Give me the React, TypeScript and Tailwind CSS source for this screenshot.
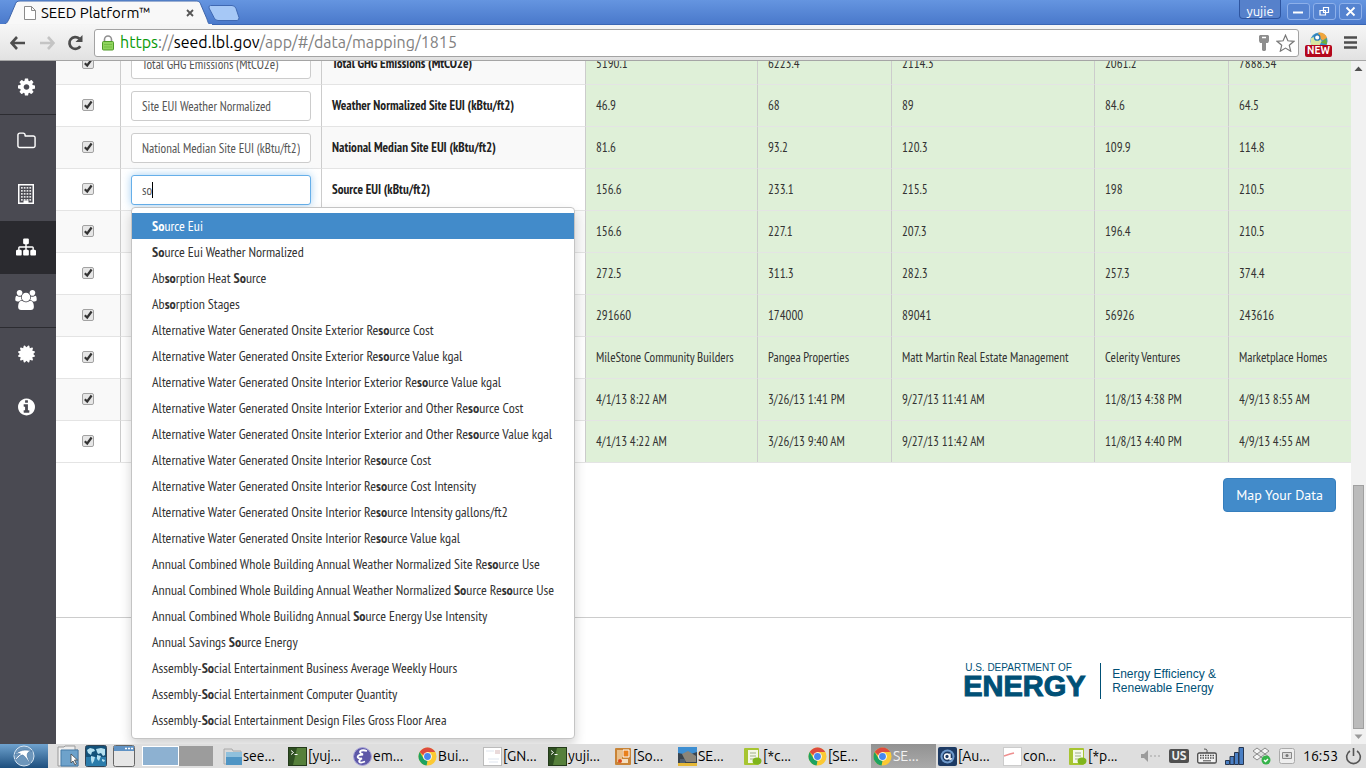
import React from "react";

const PAGE_FONT = "font-['PT_Sans_Narrow','Liberation_Sans_Narrow','Noto_Sans',sans-serif]";
const UI_FONT = "font-['Ubuntu','Noto_Sans',sans-serif]";

/* ---------- Window frame ---------- */

function TabStrip() {
  return (
    <header className="flex h-[25px] shrink-0 items-end justify-between border-b border-[#3a66b4] bg-linear-to-b from-[#6595e0] to-[#4a79cb]">
      <div className="flex items-end">
        <div className="relative -mb-px h-[25px] w-[212px]">
          <svg className="absolute inset-0 h-full w-full" viewBox="0 0 212 25" aria-hidden="true">
            <path d="M0 25 C6 25 7 23 9 19 L15 5 C16 2 17 1 20 1 H195 C199 1 200 2 201 5 L207 19 C208 23 209 25 212 25Z" fill="#f8f8f8" stroke="#3f66ab" strokeWidth="1" />
            <path d="M0 24H212V25H0Z" fill="#f5f5f5" />
          </svg>
          <div className="relative flex h-full items-center pr-3.5 pl-6">
            <svg width="12" height="14" viewBox="0 0 12 14" aria-hidden="true">
              <path d="M.5.5h7l4 4v9H.5z M7.5.5v4h4" fill="#fff" stroke="#8a8a8a" />
            </svg>
            <span className="ml-[5px] grow text-[15px] leading-5 text-black">SEED Platform™</span>
            <button aria-label="Close tab" className="flex size-4 items-center justify-center">
              <svg width="8" height="8" viewBox="0 0 8 8"><path d="M1 1l6 6M7 1L1 7" stroke="#555" strokeWidth="1.8" /></svg>
            </button>
          </div>
        </div>
        <button aria-label="New tab" className="mb-[3px] -ml-1">
          <svg width="32" height="16" viewBox="0 0 32 16">
            <path d="M2.500 .5H24q3 0 4 3l3 9q0 3-2 3H10q-3 0-4-3L1 3Q.5.5 2.500.5z" fill="#a6c8f6" stroke="#3f68b2" />
          </svg>
        </button>
      </div>
      <div className="flex h-full items-start gap-[5px] pr-1">
        <button className="h-[19px] w-[42px] rounded-b border border-t-0 border-[#2e55a0] bg-[#5681cb] text-[13px] leading-[22px] text-white">yujie</button>
        <div className="flex gap-[3px] pt-[3px] pl-px">
          <WinButton label="Minimize"><path d="M4 9.500h10" stroke="#fff" strokeWidth="2" /></WinButton>
          <WinButton label="Restore"><path d="M8.500 4.500h5v5h-5z M5 7.500h5.500v4.500H5z" stroke="#fff" strokeWidth="1.200" fill="none" /></WinButton>
          <WinButton label="Close"><path d="M5.500 4.500l8 8M13.500 4.500l-8 8" stroke="#fff" strokeWidth="1.800" /></WinButton>
        </div>
      </div>
    </header>
  );
}

function WinButton({ label, children }: { label: string; children: React.ReactNode }) {
  return (
    <button aria-label={label} className="flex h-[17px] w-[23px] items-center justify-center rounded-[3px] border border-[#8db0ea] bg-[#5583d0]">
      <svg width="19" height="17" viewBox="0 0 19 17">{children}</svg>
    </button>
  );
}

function Toolbar() {
  return (
    <div className="flex h-9 shrink-0 items-center border-b border-[#a5a5a5] bg-linear-to-b from-[#f6f6f6] to-[#e2e2e2] pr-2 pl-2.5">
      <button aria-label="Back" className="w-[29px]">
        <svg width="16" height="14" viewBox="0 0 16 14"><path d="M7 1L1.500 7 7 13M1.500 7H15" fill="none" stroke="#4d4d4d" strokeWidth="2.600" /></svg>
      </button>
      <button aria-label="Forward" className="w-[28px]">
        <svg width="16" height="14" viewBox="0 0 16 14"><path d="M9 1l5.500 6L9 13M14.500 7H1" fill="none" stroke="#c4c4c4" strokeWidth="2.600" /></svg>
      </button>
      <button aria-label="Reload" className="w-[27px]">
        <svg width="17" height="16" viewBox="0 0 17 16">
          <path d="M13.300 11.200A5.900 5.900 0 1 1 12.300 3.600" fill="none" stroke="#4d4d4d" strokeWidth="2.700" />
          <path d="M15.500 0v7H8.500z" fill="#4d4d4d" />
        </svg>
      </button>
      <div className="flex h-7 grow items-center rounded-[3px] border border-[#a3a3a3] bg-white pr-[3px] pl-[7px]">
        <svg width="12" height="16" viewBox="0 0 12 16" aria-hidden="true">
          <path d="M2.500 8V4.500a3.500 3.500 0 0 1 7 0V8" fill="none" stroke="#8f8f8f" strokeWidth="1.600" />
          <rect x=".5" y="6.500" width="11" height="8.500" rx="1" fill="#8fd45e" stroke="#4f9a28" />
          <path d="M2 9.500h8M2 12h8" stroke="#74bd45" />
        </svg>
        <div className="ml-[6px] grow pb-0.5 text-[16px] leading-6 whitespace-nowrap text-[#808080]">
          <span className="text-[#0a9a0a]">https</span>://<span className="text-black">seed.lbl.gov</span>/app/#/data/mapping/1815
        </div>
        <svg width="12" height="16" viewBox="0 0 12 16" aria-hidden="true">
          <path d="M2 0h8l1 1v5l-1 2H8v7l-1 1H5l-1-1V8H2L1 6V1z" fill="#8e8e8e" /><path d="M4 2.500h4" stroke="#fff" strokeWidth="1.500" />
        </svg>
        <button aria-label="Bookmark this page" className="ml-1.5">
          <svg width="19" height="18" viewBox="0 0 19 18"><path d="M9.500 1.200l2.400 5.600 6 .5-4.600 4 1.400 5.900-5.200-3.100-5.200 3.100 1.400-5.900-4.600-4 6-.5z" fill="#fff" stroke="#777" strokeWidth="1.200" /></svg>
        </button>
      </div>
      <div className="relative mt-1 ml-1.5 flex h-[25px] w-[27px] flex-col items-center">
        <svg width="20" height="18" viewBox="0 0 22 20" aria-hidden="true">
          <circle cx="11" cy="10" r="9.500" fill="#3b93c9" /><path d="M11 .5a9.500 9.500 0 0 1 9 6l-5 3-6-6z" fill="#f0a53c" />
          <path d="M2 7l7-3 5 6-3 6-9-2z" fill="#d8e6a0" /><circle cx="9" cy="6" r="3" fill="#fff" stroke="#2d7db8" strokeWidth="1.500" /><path d="M13 12l6-5 1 7z" fill="#6caf3a" />
        </svg>
        <span className="absolute bottom-0 h-[12px] w-full rounded-[2px] bg-[#b4071c] text-center text-[10px] leading-[12px] font-bold text-white">NEW</span>
      </div>
      <button aria-label="Menu" className="ml-3 w-[14px]">
        <svg width="13" height="13" viewBox="0 0 13 13"><path d="M0 1.500h13M0 6.500h13M0 11.500h13" stroke="#4d4d4d" strokeWidth="2.600" /></svg>
      </button>
    </div>
  );
}

/* ---------- Application sidebar ---------- */

const GLYPHS = {
  cog: { box: "0 0 1536 1792", w: 17, d: "M1024 896q0-106-75-181t-181-75-181 75-75 181 75 181 181 75 181-75 75-181zm512-109v222q0 12-8 23t-20 13l-185 28q-19 54-39 91 35 50 107 138 10 12 10 25t-9 23q-27 37-99 108t-94 71q-12 0-26-9l-138-108q-44 23-91 38-16 136-29 186-7 28-36 28h-222q-14 0-24.500-8.500t-11.500-21.500l-28-184q-49-16-90-37l-141 107q-10 9-25 9-14 0-25-11-126-114-165-168-7-10-7-23 0-12 8-23 15-21 51-66.500t54-70.500q-27-50-41-99l-183-27q-13-2-21-12.500t-8-23.500v-222q0-12 8-23t19-13l186-28q14-46 39-92-40-57-107-138-10-12-10-24 0-10 9-23 26-36 98.500-107.500t94.500-71.500q13 0 26 10l138 107q44-23 91-38 16-136 29-186 7-28 36-28h222q14 0 24.500 8.500t11.500 21.500l28 184q49 16 90 37l142-107q9-9 24-9 13 0 25 10 129 119 165 170 7 8 7 22 0 12-8 23-15 21-51 66.500t-54 70.500q26 50 41 98l183 28q13 2 21 12.500t8 23.500z" },
  folder: { box: "0 0 1664 1792", w: 19, d: "M1536 1312v-704q0-40-28-68t-68-28h-704q-40 0-68-28t-28-68v-64q0-40-28-68t-68-28h-320q-40 0-68 28t-28 68v960q0 40 28 68t68 28h1216q40 0 68-28t28-68zm128-704v704q0 92-66 158t-158 66h-1216q-92 0-158-66t-66-158v-960q0-92 66-158t158-66h320q92 0 158 66t66 158v32h672q92 0 158 66t66 158z" },
  sitemap: { box: "0 0 1792 1792", w: 20, d: "M1792 1248v320q0 40-28 68t-68 28h-320q-40 0-68-28t-28-68v-320q0-40 28-68t68-28h96v-192h-512v192h96q40 0 68 28t28 68v320q0 40-28 68t-68 28h-320q-40 0-68-28t-28-68v-320q0-40 28-68t68-28h96v-192h-512v192h96q40 0 68 28t28 68v320q0 40-28 68t-68 28h-320q-40 0-68-28t-28-68v-320q0-40 28-68t68-28h96v-192q0-52 38-90t90-38h512v-192h-96q-40 0-68-28t-28-68v-320q0-40 28-68t68-28h320q40 0 68 28t28 68v320q0 40-28 68t-68 28h-96v192h512q52 0 90 38t38 90v192h96q40 0 68 28t28 68z" },
  users: { box: "-64 0 1920 1792", w: 22, d: "M529 896q-162 5-265 128h-134q-82 0-138-40.500t-56-118.500q0-353 124-353 6 0 43.500 21t97.500 42.500 119 21.500q67 0 133-23-5 37-5 66 0 139 81 256zm1071 637q0 120-73 189.500t-194 69.500h-874q-121 0-194-69.500t-73-189.500q0-53 3.500-103.500t14-109 26.500-108.500 43-97.500 62-81 85.500-53.500 111.500-20q10 0 43 21.500t73 48 107 48 135 21.500 135-21.500 107-48 73-48 43-21.500q61 0 111.500 20t85.500 53.500 62 81 43 97.500 26.500 108.500 14 109 3.500 103.500zm-1024-1277q0 106-75 181t-181 75-181-75-75-181 75-181 181-75 181 75 75 181zm704 384q0 159-112.500 271.500t-271.500 112.500-271.500-112.500-112.500-271.500 112.500-271.500 271.500-112.500 271.500 112.500 112.500 271.500zm576 225q0 78-56 118.500t-138 40.500h-134q-103-123-265-128 81-117 81-256 0-29-5-66 66 23 133 23 59 0 119-21.500t97.500-42.500 43.500-21q124 0 124 353zm-128-609q0 106-75 181t-181 75-181-75-75-181 75-181 181-75 181 75 75 181z" },
  certificate: { box: "0 0 1536 1792", w: 17, d: "M1376 896l138 135q30 28 20 70-12 41-52 51l-188 48 53 186q12 41-19 70-29 31-70 19l-186-53-48 188q-10 40-51 52-12 2-19 2-31 0-51-22l-135-138-135 138q-28 30-70 20-41-11-51-52l-48-188-186 53q-41 12-70-19-31-29-19-70l53-186-188-48q-40-10-52-51-10-42 20-70l138-135-138-135q-30-28-20-70 12-41 52-51l188-48-53-186q-12-41 19-70 29-31 70-19l186 53 48-188q10-41 51-51 41-12 70 19l135 139 135-139q29-30 70-19 41 10 51 51l48 188 186-53q41-12 70 19 31 29 19 70l-53 186 188 48q40 10 52 51 10 42-20 70z" },
  info: { box: "0 0 1536 1792", w: 17, d: "M1024 1376v-160q0-14-9-23t-23-9h-96v-512q0-14-9-23t-23-9h-320q-14 0-23 9t-9 23v160q0 14 9 23t23 9h96v320h-96q-14 0-23 9t-9 23v160q0 14 9 23t23 9h448q14 0 23-9t9-23zm-128-896v-160q0-14-9-23t-23-9h-192q-14 0-23 9t-9 23v160q0 14 9 23t23 9h192q14 0 23-9t9-23zm640 416q0 209-103 385.500t-279.500 279.500-385.500 103-385.500-103-279.500-279.500-103-385.500 103-385.500 279.500-279.500 385.500-103 385.500 103 279.500 279.500 103 385.500z" },
};

function Glyph({ name }: { name: keyof typeof GLYPHS }) {
  const g = GLYPHS[name];
  return <svg width={g.w} height="20" viewBox={g.box} fill="currentColor" aria-hidden="true"><path d={g.d} /></svg>;
}

function BuildingGlyph() {
  const cols = [3, 5.8, 8.600, 11.400];
  const rows = [3, 6, 9, 12, 15];
  return (
    <svg width="16" height="20" viewBox="0 0 16 20" aria-hidden="true">
      <path fill="#fff" fillRule="evenodd" d="M0 0h16v20H0z M1.500 1.500v17h4V16.500h5v2h4V1.500z" />
      {rows.map((y) => cols.map((x) => <rect key={`${x}-${y}`} x={x} y={y} width="1.700" height="1.700" fill="#fff" opacity=".85" />))}
    </svg>
  );
}

function Sidebar() {
  const item = "flex h-[53px] items-center justify-center pr-1 pb-0.5";
  return (
    <nav aria-label="Main" className="w-14 shrink-0 bg-[#4a4a52] text-white">
      <a href="#settings" aria-label="Settings" className={`${item} h-[54px] border-b border-[#2c2c31]`}><Glyph name="cog" /></a>
      <a href="#projects" aria-label="Projects" className={item}><Glyph name="folder" /></a>
      <a href="#buildings" aria-label="Buildings" className={item}><BuildingGlyph /></a>
      <a href="#data" aria-label="Data" aria-current="page" className={`${item} bg-[#2a2a2f]`}><Glyph name="sitemap" /></a>
      <a href="#organizations" aria-label="Organizations" className={`${item} h-[54px] border-b border-[#2c2c31]`}><Glyph name="users" /></a>
      <a href="#feedback" aria-label="Feedback" className={item}><Glyph name="certificate" /></a>
      <a href="#about" aria-label="About" className={item}><Glyph name="info" /></a>
    </nav>
  );
}

/* ---------- Mapping table ---------- */

type Row = { field: string; header: string; values: string[] };

const ROWS: Row[] = [
  { field: "Total GHG Emissions (MtCO2e)", header: "Total GHG Emissions (MtCO2e)", values: ["5190.1", "6223.4", "2114.3", "2061.2", "7888.54"] },
  { field: "Site EUI Weather Normalized", header: "Weather Normalized Site EUI (kBtu/ft2)", values: ["46.9", "68", "89", "84.6", "64.5"] },
  { field: "National Median Site EUI (kBtu/ft2)", header: "National Median Site EUI (kBtu/ft2)", values: ["81.6", "93.2", "120.3", "109.9", "114.8"] },
  { field: "so", header: "Source EUI (kBtu/ft2)", values: ["156.6", "233.1", "215.5", "198", "210.5"] },
  { field: "", header: "", values: ["156.6", "227.1", "207.3", "196.4", "210.5"] },
  { field: "", header: "", values: ["272.5", "311.3", "282.3", "257.3", "374.4"] },
  { field: "", header: "", values: ["291660", "174000", "89041", "56926", "243616"] },
  { field: "", header: "", values: ["MileStone Community Builders", "Pangea Properties", "Matt Martin Real Estate Management", "Celerity Ventures", "Marketplace Homes"] },
  { field: "", header: "", values: ["4/1/13 8:22 AM", "3/26/13 1:41 PM", "9/27/13 11:41 AM", "11/8/13 4:38 PM", "4/9/13 8:55 AM"] },
  { field: "", header: "", values: ["4/1/13 4:22 AM", "3/26/13 9:40 AM", "9/27/13 11:42 AM", "11/8/13 4:40 PM", "4/9/13 4:55 AM"] },
];

const SUGGESTIONS = [
  "Source Eui",
  "Source Eui Weather Normalized",
  "Absorption Heat Source",
  "Absorption Stages",
  "Alternative Water Generated Onsite Exterior Resource Cost",
  "Alternative Water Generated Onsite Exterior Resource Value kgal",
  "Alternative Water Generated Onsite Interior Exterior Resource Value kgal",
  "Alternative Water Generated Onsite Interior Exterior and Other Resource Cost",
  "Alternative Water Generated Onsite Interior Exterior and Other Resource Value kgal",
  "Alternative Water Generated Onsite Interior Resource Cost",
  "Alternative Water Generated Onsite Interior Resource Cost Intensity",
  "Alternative Water Generated Onsite Interior Resource Intensity gallons/ft2",
  "Alternative Water Generated Onsite Interior Resource Value kgal",
  "Annual Combined Whole Building Annual Weather Normalized Site Resource Use",
  "Annual Combined Whole Building Annual Weather Normalized Source Resource Use",
  "Annual Combined Whole Builidng Annual Source Energy Use Intensity",
  "Annual Savings Source Energy",
  "Assembly-Social Entertainment Business Average Weekly Hours",
  "Assembly-Social Entertainment Computer Quantity",
  "Assembly-Social Entertainment Design Files Gross Floor Area",
];

function Highlighted({ text }: { text: string }) {
  return <>{text.split(/(so)/i).map((part, i) => (i % 2 ? <strong key={i} className="font-bold">{part}</strong> : part))}</>;
}

function Suggestions() {
  return (
    <ul role="listbox" aria-label="Suggested fields" className="absolute top-full left-0 z-10 mt-0.5 rounded border border-[#c4c4c4] bg-white py-[5px] text-[14px] whitespace-nowrap shadow-[0_6px_12px_rgba(0,0,0,0.18)]">
      {SUGGESTIONS.map((s, i) => (
        <li key={s} role="option" aria-selected={i === 0} className={`px-5 leading-[26px] ${i === 0 ? "bg-[#428bca] text-white" : "text-[#333]"}`}>
          <Highlighted text={s} />
        </li>
      ))}
    </ul>
  );
}

function FieldInput({ row, index }: { row: Row; index: number }) {
  const active = row.field === "so";
  return (
    <div className="relative">
      <input
        aria-label={`Mapped field ${index + 1}`}
        defaultValue={row.field}
        className={`block h-[30px] w-full rounded-[3px] border bg-white px-2.5 pt-0.5 text-[#555] outline-none ${active ? "border-[#66afe9] shadow-[0_0_8px_rgba(102,175,233,0.6)]" : "border-[#ccc]"}`}
      />
      {active && <span className="absolute top-[7px] left-[21px] h-4 w-px bg-black" />}
      {active && <Suggestions />}
    </div>
  );
}

function MappingTable() {
  const edge = "border-l border-l-[#ccc]";
  return (
    <table className="-mt-[19px] w-full table-fixed border-separate border-spacing-0 border-b border-[#e4e4e4] text-left text-[#333]">
      <colgroup>
        <col className="w-16" /><col className="w-[201px]" /><col className="w-[264px]" /><col className="w-[172px]" />
        <col className="w-[134px]" /><col className="w-[203px]" /><col className="w-[134px]" /><col />
      </colgroup>
      <tbody>
        {ROWS.map((row, i) => (
          <tr key={i} className={`h-[42px] ${i % 2 ? "bg-white" : "bg-[#f9f9f9]"}`}>
            <td className="border-t border-[#e4e4e4] p-0 text-center">
              <label className="flex justify-center pb-0.5">
                <input type="checkbox" defaultChecked aria-label={`Include row ${i + 1}`} className="peer sr-only" />
                <svg width="12" height="12" viewBox="0 0 12 12" aria-hidden="true">
                  <rect x=".5" y=".5" width="11" height="11" rx="1.500" fill="#e6e6e6" stroke="#a2a2a2" />
                  <path d="M2.800 6.200l2.400 2.300L9.600 2.500" fill="none" stroke="#333" strokeWidth="2.200" />
                </svg>
              </label>
            </td>
            <td className={`border-t border-[#e4e4e4] px-2.5 py-0 ${edge}`}><FieldInput row={row} index={i} /></td>
            <th scope="row" className={`border-t border-[#e4e4e4] px-2.5 py-0 font-bold whitespace-nowrap text-[#222] ${edge}`}>{row.header}</th>
            {row.values.map((v, j) => (
              <td key={j} className={`border-t border-[#e4e4e4] bg-[#dff0d8] px-2.5 py-0 whitespace-nowrap ${edge}`}>{v}</td>
            ))}
          </tr>
        ))}
      </tbody>
    </table>
  );
}

function Footer() {
  return (
    <footer className="flex items-center justify-end border-t border-[#ccc] pt-11 pr-[135px] font-['Liberation_Sans',sans-serif] text-[#005076]">
      <div className="flex items-center">
        <div className="flex w-[124px] flex-col">
          <span className="text-[10px] leading-[11px] whitespace-nowrap">U.S. DEPARTMENT OF</span>
          <span className="-ml-0.5 text-[29px] leading-[26px] font-bold [-webkit-text-stroke:1px_#005076]">ENERGY</span>
        </div>
        <span className="mr-[11px] ml-[11px] h-9 w-px bg-[#005076]" />
        <span className="text-[12px] leading-[14px]">Energy Efficiency &amp;<br />Renewable Energy</span>
      </div>
    </footer>
  );
}

function ScrollBar() {
  return (
    <div aria-hidden="true" className="flex w-[15px] shrink-0 flex-col items-center bg-[#f1f1f1]">
      <svg className="shrink-0" width="15" height="15" viewBox="0 0 15 15"><path d="M7.500 5.500l4 4.500h-8z" fill="#505050" /></svg>
      <div className="grow-[410]" />
      <div className="w-[11px] grow-[243] border border-[#a0a0a0] bg-[#bbb]" />
      <svg className="shrink-0" width="15" height="15" viewBox="0 0 15 15"><path d="M3.500 5.500h8l-4 4.500z" fill="#999" /></svg>
    </div>
  );
}

/* ---------- Desktop panel ---------- */

function ChromeIcon() {
  return (
    <svg width="19" height="19" viewBox="0 0 20 20" aria-hidden="true">
      <circle cx="10" cy="10" r="9.500" fill="#fcc934" />
      <path d="M1.800 5.200L6.200 12.500 10 14.500 9 19.400A9.500 9.500 0 0 1 1.800 5.200z" fill="#1da362" />
      <path d="M1.800 5.200A9.500 9.500 0 0 1 18.200 5.200H10L6 9z" fill="#dd4b3e" />
      <circle cx="10" cy="10" r="4.600" fill="#fff" /><circle cx="10" cy="10" r="3.600" fill="#4687f0" />
    </svg>
  );
}

function TaskIcon({ kind }: { kind: string }) {
  if (kind === "chrome") return <ChromeIcon />;
  return (
    <svg width="19" height="19" viewBox="0 0 19 19" aria-hidden="true">
      {kind === "folder" && <><path d="M1 2h8l1 2h8v13H1z" fill="#d9d9d9" stroke="#aaa" /><path d="M3 5h16v13H3z" fill="#4f95c4" /><path d="M3 5h16v5H3z" fill="#8fc0dc" /></>}
      {kind === "terminal" && <><rect x=".5" y=".5" width="18" height="18" fill="#2f4f22" stroke="#233a1a" /><path d="M9 1h9v17H5z" fill="#56803b" /><path d="M3 3.500l2.500 2L3 7.500M6.500 7.500h3" stroke="#fff" fill="none" /></>}
      {kind === "emacs" && <><circle cx="9.500" cy="9.500" r="9" fill="#5d58a8" stroke="#aaa6d8" /><path d="M14 4C8 2 4 5 10 7.500 3 8 3 12 9 11.500 4 14 6 17 12 14.500" stroke="#fff" strokeWidth="1.800" fill="none" /></>}
      {kind === "image" && <><rect x=".5" y=".5" width="18" height="18" fill="#fff" stroke="#bbb" /><path d="M3 4h8M5 12h11M6 15h9" stroke="#dfe5ee" /><path d="M12 3h5v4h-5z" fill="#eadada" /></>}
      {kind === "plot" && <><rect x=".5" y=".5" width="18" height="18" fill="#fff" stroke="#ccc" /><path d="M1 9l6-2 4-1" stroke="#ee8f8f" strokeWidth="1.500" fill="none" /></>}
      {kind === "impress" && <><rect x="2" y="1" width="16" height="17" rx="1" fill="#c98436" /><rect x="4" y="3" width="5" height="12" fill="#e9c08b" /><path d="M10 3h6v7h-6z" fill="#e8801c" stroke="#fff" /><path d="M6 12h9v4H6z" fill="#f4dfc0" /><circle cx="7" cy="14" r="2" fill="#dd4a1c" /></>}
      {kind === "photo" && <><rect width="19" height="19" fill="#39444f" /><path d="M0 0h19v5l-9 3-10-2z" fill="#3e8fd2" /><path d="M4 7l6-3 8 5v6H8z" fill="#8b8579" /><path d="M0 16h19v3H0z" fill="#e5b736" /><path d="M2 12h5v4H2z" fill="#4f5f70" /></>}
      {kind === "sheet" && <><rect x="1" y="1" width="15" height="17" rx="1" fill="#a7c531" /><rect x="5" y="3" width="10" height="13" fill="#f4f8e8" /><path d="M7 6h6M7 9h6M7 12h4" stroke="#9fb08a" /><ellipse cx="14" cy="14" rx="4.500" ry="3.500" fill="#7fb51c" /></>}
      {kind === "about" && <><rect width="19" height="19" rx="2" fill="#1d3a63" /><circle cx="9.500" cy="9.500" r="7" fill="#6f9acb" /><circle cx="9.500" cy="9.500" r="5" fill="#1d3a63" /><circle cx="9" cy="9.500" r="2.400" fill="none" stroke="#fff" strokeWidth="1.500" /><path d="M12 6.500v6l2-1" stroke="#fff" strokeWidth="1.300" fill="none" /></>}
    </svg>
  );
}

const TASKS: [string, string][] = [
  ["folder", "see..."], ["terminal", "[yuj..."], ["emacs", "em..."], ["chrome", "Bui..."], ["image", "[GN..."], ["terminal", "yuji..."], ["impress", "[So..."],
  ["photo", "SE..."], ["sheet", "[*c..."], ["chrome", "[SE..."], ["chrome", "SE..."], ["about", "[Au..."], ["plot", "con..."], ["sheet", "[*p..."],
];

function DesktopPanel() {
  return (
    <footer className="flex h-6 shrink-0 items-center bg-[#dedede] text-[14px] text-black">
      <button aria-label="Applications" className="flex h-full w-12 shrink-0 items-center justify-center bg-linear-to-b from-[#6fa3cf] to-[#1d4f7e]">
        <svg width="22" height="22" viewBox="0 0 22 22"><circle cx="11" cy="11" r="10" fill="#6d96bb" stroke="#d7e5f1" /><path d="M1.500 10c5-5 10-6 18-4-4 0-6 2-5 6l3 7c-3-3-5-8-8-9-3 0-5 5-8 5 2-3 4-5 6-6-2-1-4 0-6 1z" fill="#fff" stroke="#3a6c9c" strokeWidth=".6" /></svg>
      </button>
      <div className="flex shrink-0 gap-1.5 pl-[9px]">
        <button aria-label="Files"><svg width="22" height="22" viewBox="0 0 22 22"><path d="M1 2h6l1-1h10v4h3v16H1z" fill="#eee" stroke="#999" /><path d="M4 5h17v16H4z" fill="#6ea2cb" stroke="#457ba8" /><path d="M14 9v9l2-2 2 4 1.500-1-2-4h3z" fill="#fff" stroke="#444" strokeWidth=".8" /></svg></button>
        <button aria-label="Web browser"><svg width="22" height="22" viewBox="0 0 22 22"><rect x=".5" y=".5" width="21" height="21" rx="2" fill="#14527a" stroke="#345" /><path d="M1 12h20v9H1z" fill="#2b7cab" /><path d="M2 5l3-2 4 1 1 2-3 1-1 3-3-2z M6 11l4 1-1 4-2 3-1-4z M11 4l5-1 4 1v6l-2 1-2-3-3 1-1-2z M12 10l4 1-2 5-2-2z M17 14l3 1-1 2-2-1z" fill="#b5e0f0" /></svg></button>
        <button aria-label="Show desktop"><svg width="22" height="22" viewBox="0 0 22 22"><rect x=".5" y=".5" width="21" height="21" rx="2" fill="#e6e6e6" stroke="#666" /><path d="M1 1h20v5H1z" fill="#5f92c4" /><path d="M12 3.500h2m1 0h2m1 0h2" stroke="#fff" strokeWidth="1.500" /></svg></button>
      </div>
      <div className="ml-[7px] flex h-5 w-[71px] shrink-0">
        <span className="flex-1 border border-white bg-[#8db1d1]" /><span className="flex-1 bg-[#9c9c9c]" />
      </div>
      <div className="ml-2 flex min-w-0 grow">
        {TASKS.map(([kind, label], i) => (
          <button key={i} className={`flex h-6 w-[65px] shrink-0 items-center gap-px pl-0.5 whitespace-nowrap ${i === 10 ? "bg-linear-to-b from-[#929292] to-[#aaa] text-[#f2f2f2]" : ""}`}>
            <TaskIcon kind={kind} />{label}
          </button>
        ))}
      </div>
      <div className="flex shrink-0 items-center gap-2 pr-1">
        <svg width="21" height="12" viewBox="0 0 21 12" aria-label="Volume"><path d="M1 4h3l4-4v12L4 8H1z" fill="#9b9b9b" /><path d="M10 6h2m2 0h2m2 0h2" stroke="#b5b5b5" strokeWidth="1.500" /></svg>
        <span className="h-[14px] w-5 rounded-[2px] bg-[#4f4f4f] text-center text-[12px] leading-[14px] font-bold text-[#eee]">US</span>
        <svg width="20" height="16" viewBox="0 0 20 16" aria-label="Keyboard"><path d="M10 5V2q0-1-3-1" stroke="#555" fill="none" /><rect x=".7" y="5" width="18.600" height="10" rx="1.500" fill="#f2f2f2" stroke="#4c4c4c" strokeWidth="1.300" /><path d="M3 7.500h14M3 10h14" stroke="#4c4c4c" strokeWidth="1.400" strokeDasharray="1.500 1" /><path d="M6 12.800h8" stroke="#4c4c4c" /></svg>
        <svg width="19" height="18" viewBox="0 0 19 18" aria-label="Network"><g fill="#4a7fc4" stroke="#27364f"><path d="M.5 13.500h4v4h-4z" /><path d="M5 9.500h4v8H5z" /><path d="M9.500 5.500h4v12h-4z" /><path d="M14 .5h4.500v17H14z" /></g></svg>
        <svg width="19" height="18" viewBox="0 0 19 18" aria-label="Dropbox"><path d="M5 1l4 3-4 3-4-3z M13 1l4 3-4 3-4-3z M5 7l4 3-4 3-4-3z M13 7l4 3-4 3-4-3z" fill="#f5f5f5" stroke="#8a8a8a" /><circle cx="14" cy="13" r="4.500" fill="#36b34a" /><path d="M12 13l1.500 1.500L16 12" stroke="#fff" strokeWidth="1.400" fill="none" /></svg>
        <svg width="16" height="16" viewBox="0 0 16 16" aria-label="Display"><rect x=".5" y=".5" width="15" height="15" rx="2" fill="#eee" stroke="#aaa" /><path d="M3.500 4.500h9v6h-9z" fill="#ddd" stroke="#888" /><circle cx="8" cy="7.500" r="1.500" fill="#777" /></svg>
        <time className="w-[34px]">16:53</time>
        <button aria-label="Power"><svg width="17" height="17" viewBox="0 0 17 17"><path d="M5 3a6.800 6.800 0 1 0 7 0M8.500 0v8" fill="none" stroke="#555" strokeWidth="1.600" /></svg></button>
      </div>
    </footer>
  );
}

export default function App() {
  return (
    <div className={`flex h-screen flex-col overflow-hidden bg-white ${UI_FONT}`}>
      <TabStrip />
      <Toolbar />
      <div className={`flex min-h-0 grow text-[13px] ${PAGE_FONT}`}>
        <Sidebar />
        <main className="min-w-0 grow overflow-hidden">
          <MappingTable />
          <div className="flex justify-end pt-[15px] pr-[15px] pb-[105px]">
            <button className="h-[34px] rounded border border-[#357ebd] bg-[#428bca] px-3 font-['PT_Sans','Noto_Sans',sans-serif] text-[14px] text-white">Map Your Data</button>
          </div>
          <Footer />
        </main>
        <ScrollBar />
      </div>
      <DesktopPanel />
    </div>
  );
}
